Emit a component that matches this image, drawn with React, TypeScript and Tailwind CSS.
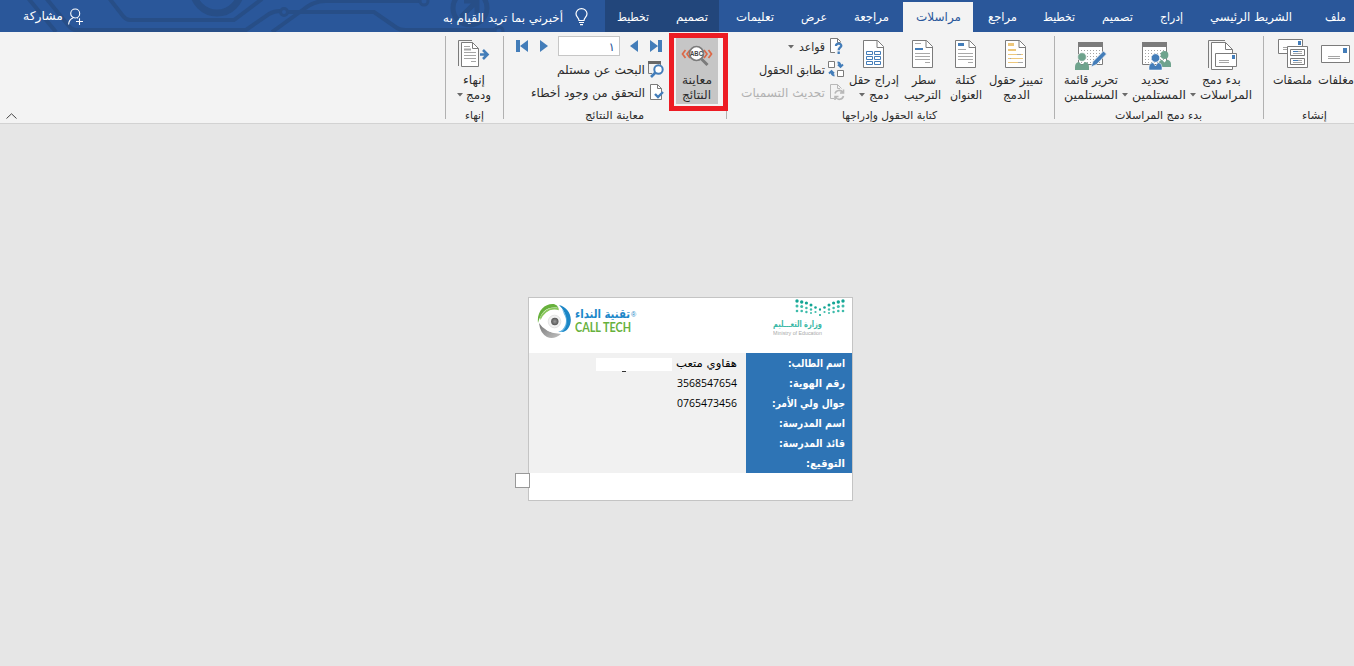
import { useLayoutEffect, useRef, useState, type ReactNode } from 'react';

/** Arabic label stretched or condensed to the width of its box. */
function Fit({ children, className = '', dir = 'rtl' }: { children: ReactNode; className?: string; dir?: 'rtl' | 'ltr' }) {
  const box = useRef<HTMLSpanElement>(null);
  const inner = useRef<HTMLSpanElement>(null);
  const [scale, setScale] = useState(1);
  useLayoutEffect(() => {
    if (box.current && inner.current && inner.current.offsetWidth) {
      setScale(box.current.clientWidth / inner.current.getBoundingClientRect().width);
    }
  }, []);
  return (
    <span ref={box} dir="ltr" className={`flex shrink-0 items-center whitespace-nowrap ${className.includes('h-[') ? '' : 'h-[15px] leading-[15px]'} ${className}`}>
      <span ref={inner} dir={dir} className="inline-block origin-left" style={{ transform: `scaleX(${scale})` }}>
        {children}
      </span>
    </span>
  );
}

function Caret({ className = '' }: { className?: string }) {
  return (
    <svg viewBox="0 0 6 4" className={`h-[4px] w-[6px] shrink-0 ${className}`}>
      <path d="M0 0H6L3 3.5Z" fill="#6a6a6a" />
    </svg>
  );
}

function Sep() {
  return <div className="mt-[4px] h-[83px] w-px shrink-0 bg-[#b1b1b1]" />;
}

function Group({ width, label, children }: { width: string; label: ReactNode; children: ReactNode }) {
  return (
    <section className={`flex h-[91px] shrink-0 flex-col ${width}`}>
      <div className="flex h-[76px] shrink-0">{children}</div>
      {label}
    </section>
  );
}

function Big({ className, icon, top, bottom }: { className: string; icon: ReactNode; top: ReactNode; bottom?: ReactNode }) {
  return (
    <div className={`flex shrink-0 flex-col pt-[5px] ${className}`}>
      <div className="flex h-[36px]">{icon}</div>
      <div className="flex h-[15px]">{top}</div>
      <div className="flex h-[15px] items-center">{bottom}</div>
    </div>
  );
}

const G = '#7b7b7b';
const B = '#437db9';

function Page({ children, className = '' }: { children?: ReactNode; className?: string }) {
  return (
    <svg viewBox="0 0 22 29" className={`mt-[3px] h-[29px] w-[22px] shrink-0 ${className}`}>
      <path d="M.5.5H14.5L20.5 6.5V27.5H.5Z" fill="#fff" stroke={G} />
      <path d="M14 .5V7.5H20.5" fill="none" stroke={G} />
      {children}
    </svg>
  );
}

function Circuit() {
  return (
    <svg viewBox="0 0 605 32" className="absolute left-0 top-0 h-[32px] w-[605px]" fill="none" stroke="#274e87" strokeWidth="4">
      <path d="M28 -2L56 32M46 -2L68 25Q72 30 76 30H246L269 14Q274 11 280 11M109 -2L123 16Q126 20 130 20H234L262 -1M272 32L304 9Q314 1 325 1H419M288 12H374L397 28Q400 30 405 30H494" />
      <circle cx="217" cy="-11" r="24" strokeWidth="7" />
      <circle cx="284" cy="12" r="3.5" strokeWidth="3" />
      <circle cx="424" cy="1" r="4" strokeWidth="3" />
      <circle cx="499" cy="31" r="4" strokeWidth="3" />
      <circle cx="470" cy="8" r="17" strokeWidth="5" />
      <path d="M461 17L476 2M464 1H477V14" strokeWidth="5" />
    </svg>
  );
}

function TabBar() {
  return (
    <header className="relative flex h-[32px] w-full bg-[#2a579a] text-[12px] text-white">
      <Circuit />
      <div className="relative flex w-[605px] shrink-0 items-start">
        <Fit className="ml-[23px] mt-[9px] w-[40px]">مشاركة</Fit>
        <svg viewBox="0 0 16 17" className="ml-[5px] mt-[8px] h-[17px] w-[16px]" fill="none" stroke="#fff" strokeWidth="1.1">
          <circle cx="7.2" cy="5.5" r="4.5" />
          <path d="M.6 16.5C.8 13 2.8 10.8 5.2 9.8M9 9.6L10 10.2M11.5 10.2V17M8 13.5H15" />
        </svg>
        <Fit className="ml-[359px] mt-[11px] w-[120px]">أخبرني بما تريد القيام به</Fit>
        <svg viewBox="0 0 13 18" className="ml-[12px] mt-[8px] h-[18px] w-[13px]" fill="none" stroke="#fff" strokeWidth="1.2">
          <path d="M4 12.5C4 9.5 1 9 1 5.8A5.3 5 0 0 1 12 5.8C12 9 9 9.5 9 12.5ZM4 14.5H9M5 16.6H8" />
        </svg>
      </div>
      <div className="flex h-[32px] w-[114px] shrink-0 bg-[#22467b] pt-[10px]">
        <Fit className="ml-[12px] w-[32px]">تخطيط</Fit>
        <Fit className="ml-[27px] w-[32px]">تصميم</Fit>
      </div>
      <div className="flex w-[184px] shrink-0 pt-[10px]">
        <Fit className="ml-[17px] w-[38px]">تعليمات</Fit>
        <Fit className="ml-[27px] w-[26px]">عرض</Fit>
        <Fit className="ml-[27px] w-[35px]">مراجعة</Fit>
      </div>
      <div className="mt-[2px] flex h-[30px] w-[70px] shrink-0 bg-[#f3f3f3] pt-[8px] text-[#2a579a]">
        <Fit className="ml-[13px] w-[45px]">مراسلات</Fit>
      </div>
      <div className="flex w-[381px] shrink-0 pt-[10px]">
        <Fit className="ml-[15px] w-[29px]">مراجع</Fit>
        <Fit className="ml-[26px] w-[32px]">تخطيط</Fit>
        <Fit className="ml-[27px] w-[31px]">تصميم</Fit>
        <Fit className="ml-[27px] w-[23px]">إدراج</Fit>
        <Fit className="ml-[27px] w-[82px]">الشريط الرئيسي</Fit>
        <Fit className="ml-[33px] w-[21px]">ملف</Fit>
      </div>
    </header>
  );
}

function FinishGroup() {
  return (
    <Group width="w-[57px]" label={<Fit className="ml-[19px] w-[19px] text-[11px]">إنهاء</Fit>}>
      <Big
        className="w-[57px]"
        icon={
          <svg viewBox="0 0 32 28" className="ml-[12px] mt-[3px] h-[28px] w-[32px]">
            <path d="M.5 26V.5H14" fill="none" stroke={G} />
            <path d="M3.5 2.5H14.5L20.5 8.5V26.5H3.5Z" fill="#fff" stroke={G} />
            <path d="M14.5 2.5V8.5H20.5" fill="none" stroke={G} />
            <path d="M6 6.5H12M6 12.5H18M6 15.5H18M6 18.5H18M13 21.5H18" stroke="#a5a5a5" />
            <path d="M6 9.5H13" stroke="#a5a5a5" strokeWidth="2" />
            <path d="M22 14.5H29M25 10L29.5 14.5L25 19" fill="none" stroke={B} strokeWidth="2.6" />
          </svg>
        }
        top={<Fit className="ml-[17px] w-[22px]">إنهاء</Fit>}
        bottom={<><Caret className="-mt-[2px] ml-[11px]" /><Fit className="ml-[3px] w-[25px]">ودمج</Fit></>}
      />
    </Group>
  );
}

function PreviewGroup() {
  return (
    <Group width="w-[222px]" label={<Fit className="ml-[81px] w-[59px] text-[11px]">معاينة النتائج</Fit>}>
      <div className="flex w-[165px] shrink-0 flex-col pt-[4px]">
        <div className="flex h-[20px] items-center">
          <svg viewBox="0 0 12 12" className="ml-[12px] h-[12px] w-[12px]" fill={B}><path d="M0 0H4V12H0ZM12 0V12L4 6Z" /></svg>
          <svg viewBox="0 0 8 12" className="ml-[12px] h-[12px] w-[8px]" fill={B}><path d="M0 0L8 6L0 12Z" /></svg>
          <div className="ml-[10px] flex h-[20px] w-[62px] items-center justify-end border border-[#c6c6c6] bg-white pr-[4px] pt-[2px] text-[12px] text-[#2a579a]">١</div>
          <svg viewBox="0 0 8 12" className="ml-[10px] h-[12px] w-[8px]" fill={B}><path d="M8 0L0 6L8 12Z" /></svg>
          <svg viewBox="0 0 12 12" className="ml-[12px] h-[12px] w-[12px]" fill={B}><path d="M8 0H12V12H8ZM0 0V12L8 6Z" /></svg>
        </div>
        <div className="mt-[5px] flex h-[17px]">
          <Fit className="ml-[53px] mt-[2px] w-[88px]">البحث عن مستلم</Fit>
          <svg viewBox="0 0 17 17" className="ml-[3px] h-[17px] w-[17px]">
            <path d="M.5 3V12.5H4M12.5 3V4" fill="none" stroke={G} />
            <path d="M0 0H13V3H0Z" fill="#686868" />
            <circle cx="10.5" cy="8.5" r="4.2" fill="#fff" stroke={B} strokeWidth="2" />
            <path d="M7.5 11.5L3 16" stroke={B} strokeWidth="2.6" />
          </svg>
        </div>
        <div className="mt-[6px] flex h-[17px]">
          <Fit className="ml-[27px] mt-[2px] w-[114px]">التحقق من وجود أخطاء</Fit>
          <svg viewBox="0 0 14 17" className="ml-[5px] h-[17px] w-[14px]">
            <path d="M.5.5H7.5L11.5 4.5V15.5H.5Z" fill="#fff" stroke={G} />
            <path d="M7.5.5V4.5H11.5" fill="none" stroke={G} />
            <path d="M5 10L8 13L13 8" fill="none" stroke={B} strokeWidth="2.4" />
          </svg>
        </div>
      </div>
      <div className="relative z-10 mt-px h-[78px] w-[59px] shrink-0 border-[5px] border-[#ed1c24] bg-[#f3f3f3]">
        <div className="ml-[2px] flex h-[66px] w-[42px] flex-col bg-[#c6c6c6] pt-[4px]">
          <svg viewBox="0 0 32 26" className="ml-[5px] h-[26px] w-[32px] shrink-0">
            <path d="M4.5 8L1.5 12L4.5 16M9 8L6 12L9 16M23 8L26 12L23 16M27.5 8L30.5 12L27.5 16" fill="none" stroke="#dc6847" strokeWidth="1.7" />
            <circle cx="15.5" cy="11.5" r="7" fill="#fff" stroke="#7b7b7b" strokeWidth="1.7" />
            <path d="M20.5 17L26.5 23" stroke="#7b7b7b" strokeWidth="3" />
            <text x="15.5" y="14" fontSize="6.5" fontWeight="bold" textAnchor="middle" textLength="13" lengthAdjust="spacingAndGlyphs" fill="#444" fontFamily="Liberation Sans, sans-serif">ABC</text>
          </svg>
          <Fit className="ml-[6px] mt-[5px] w-[30px]">معاينة</Fit>
          <Fit className="ml-[6px] w-[29px]">النتائج</Fit>
        </div>
      </div>
    </Group>
  );
}

function FieldsGroup() {
  return (
    <Group width="w-[327px]" label={<Fit className="ml-[115px] w-[95px] text-[11px]">كتابة الحقول وإدراجها</Fit>}>
      <div className="flex w-[119px] shrink-0 flex-col pt-[6px]">
        <div className="flex h-[17px]">
          <Caret className="ml-[61px] mt-[7px]" />
          <Fit className="ml-[5px] mt-[2px] w-[26px]">قواعد</Fit>
          <svg viewBox="0 0 14 17" className="ml-[5px] h-[17px] w-[14px]">
            <path d="M5 14.5H.5V.5H7.5L10.5 3.5V4" fill="#fff" stroke={G} />
            <path d="M7.5.5V4.5H10.5" fill="none" stroke={G} />
            <path d="M6 8C6 4.8 11.3 4.8 11.3 7.8C11.3 9.5 8.7 9.5 8.7 12.2M8.7 13.6V16" fill="none" stroke={B} strokeWidth="2.3" />
          </svg>
        </div>
        <div className="mt-[6px] flex h-[17px]">
          <Fit className="ml-[32px] mt-[2px] w-[66px]">تطابق الحقول</Fit>
          <svg viewBox="0 0 17 17" className="ml-[3px] h-[17px] w-[17px]">
            <path d="M.5.5H6.5V6.5H.5ZM9.5 9.5H15.5V15.5H9.5Z" fill="#fff" stroke={G} />
            <path d="M9.500 1.500Q12.500 1.500 12.500 5.500M10 3.500L12.500 6L15 3.500M6.500 14.500Q3.500 14.500 3.500 10.500M1 12.500L3.500 10L6 12.500" fill="none" stroke={B} strokeWidth="1.9" />
          </svg>
        </div>
        <div className="mt-[6px] flex h-[17px] text-[#b1b1b1]">
          <Fit className="ml-[14px] mt-[2px] w-[84px]">تحديث التسميات</Fit>
          <svg viewBox="0 0 15 17" className="ml-[5px] h-[17px] w-[15px]" fill="none" stroke="#b8b8b8">
            <path d="M4 14.500H.5V.5H7.500L11.500 4.500M7.500 .5V4.500H10" />
            <path d="M5 9.500A4.300 4.300 0 0 1 12.800 8.500M13.500 5.500V9H10M13.500 12A4.300 4.300 0 0 1 5.500 13M5 16V12.500H8.500" strokeWidth="1.6" />
          </svg>
        </div>
      </div>
      <Big
        className="ml-[3px] w-[50px]"
        icon={
          <Page className="ml-[14px]">
            <path d="M3.500 11.500H9.500V14.500H3.500ZM11.500 11.500H17.500V14.500H11.500ZM3.500 16.500H9.500V19.500H3.500ZM11.500 16.500H17.500V19.500H11.500ZM3.500 21.500H9.500V24.500H3.500ZM11.500 21.500H17.500V24.500H11.500Z" fill="none" stroke={B} />
          </Page>
        }
        top={<Fit className="w-[50px]">إدراج حقل</Fit>}
        bottom={<><Caret className="-mt-[2px] ml-[10px]" /><Fit className="ml-[4px] w-[20px]">دمج</Fit></>}
      />
      <Big
        className="ml-[5px] w-[38px]"
        icon={
          <Page className="ml-[8px]">
            <path d="M3 3.500H9M3 13.500H18M3 16.500H18M3 19.500H18M13 22.500H18" stroke="#a9a9a9" />
            <path d="M3 9H11" stroke={B} strokeWidth="2" />
          </Page>
        }
        top={<Fit className="ml-[8px] w-[24px]">سطر</Fit>}
        bottom={<Fit className="w-[37px]">الترحيب</Fit>}
      />
      <Big
        className="ml-[8px] w-[32px]"
        icon={
          <Page className="ml-[5px]">
            <path d="M3 9.500H11M3 13.500H18M3 16.500H18M3 19.500H18M13 22.500H18" stroke="#a9a9a9" />
            <path d="M3 4.500H9" stroke={B} strokeWidth="3" />
          </Page>
        }
        top={<Fit className="ml-[5px] w-[21px]">كتلة</Fit>}
        bottom={<Fit className="w-[32px]">العنوان</Fit>}
      />
      <Big
        className="ml-[7px] w-[54px]"
        icon={
          <Page className="ml-[16px]">
            <path d="M3 14.500H18M3 18.500H18M3 22.500H18" stroke="#edc77c" strokeWidth="1.2" />
            <path d="M12 14.500H16M5 18.500H6M13 22.500H18" stroke="#a9a9a9" />
            <path d="M3 4.500H9" stroke="#edc77c" strokeWidth="3" />
            <path d="M3 10H11" stroke="#edc77c" strokeWidth="2" />
          </Page>
        }
        top={<Fit className="w-[54px]">تمييز حقول</Fit>}
        bottom={<Fit className="ml-[14px] w-[27px]">الدمج</Fit>}
      />
    </Group>
  );
}

function Calendar() {
  return (
    <>
      <path d="M.5 4V22.500H24.500V4" fill="#fff" stroke={G} />
      <path d="M0 0H25V5H0Z" fill="#7b7b7b" />
      <path d="M3 8.500H23M3 11.500H23M3 14.500H23M3 17.500H23M3 20.500H23" stroke="#a5a5a5" strokeDasharray="1 2" />
    </>
  );
}

function StartGroup() {
  return (
    <Group width="w-[208px]" label={<Fit className="ml-[60px] w-[87px] text-[11px]">بدء دمج المراسلات</Fit>}>
      <Big
        className="ml-[9px] w-[54px]"
        icon={
          <svg viewBox="-3 0 33 29" className="ml-[11px] mt-[5px] h-[29px] w-[33px]">
            <Calendar />
            <circle cx="4" cy="15" r="4.300" fill="#6fa38d" stroke="#f3f3f3" strokeWidth=".7" />
            <path d="M-3 28V25Q-3 20.500 1 20L4 23L7 20Q11 20.500 11 25V28Z" fill="#6fa38d" />
            <path d="M13 25L15 19.500L25.500 9L28.500 12L18.500 22.500Z" fill={B} stroke="#f3f3f3" strokeWidth=".8" />
          </svg>
        }
        top={<Fit className="w-[54px]">تحرير قائمة</Fit>}
        bottom={<Fit className="w-[54px]">المستلمين</Fit>}
      />
      <Big
        className="ml-[4px] w-[64px]"
        icon={
          <svg viewBox="0 0 30 29" className="ml-[20px] mt-[5px] h-[29px] w-[30px]">
            <Calendar />
            <circle cx="22.500" cy="13" r="3.900" fill="#6fa38d" />
            <path d="M17 25V21Q17 18.500 20 17.800L22.500 20.500L25 17.800Q29 18.500 29 22V25Z" fill="#6fa38d" />
            <circle cx="13.500" cy="16" r="4.300" fill={B} stroke="#fff" strokeWidth=".7" />
            <path d="M7 28V25Q7 21 11 20.500L13.500 24L16 20.500Q20 21 20 25V28Z" fill={B} stroke="#fff" strokeWidth=".5" />
          </svg>
        }
        top={<Fit className="ml-[19px] w-[28px]">تحديد</Fit>}
        bottom={<><Caret className="-mt-[2px]" /><Fit className="ml-[4px] w-[54px]">المستلمين</Fit></>}
      />
      <Big
        className="ml-[4px] w-[62px]"
        icon={
          <svg viewBox="0 0 30 31" className="ml-[18px] mt-[3px] h-[31px] w-[30px]">
            <path d="M.5 28V.5H17" fill="none" stroke={G} />
            <path d="M3.500 2.500H17.500L24.500 9.500V29.500H3.500Z" fill="#fff" stroke={G} />
            <path d="M17.500 2.500V9.500H24.500" fill="none" stroke={G} />
            <path d="M7.500 13.500H28.500V26.500H7.500Z" fill="#fff" stroke={G} />
            <path d="M24 15H27V19H24Z" fill={B} />
            <path d="M11 20.500H21M11 22.500H21" stroke="#a5a5a5" />
          </svg>
        }
        top={<Fit className="ml-[12px] w-[39px]">بدء دمج</Fit>}
        bottom={<><Caret className="-mt-[2px]" /><Fit className="ml-[4px] w-[52px]">المراسلات</Fit></>}
      />
    </Group>
  );
}

function CreateGroup() {
  return (
    <Group width="w-[90px]" label={<Fit className="ml-[38px] w-[25px] text-[11px]">إنشاء</Fit>}>
      <Big
        className="ml-[9px] w-[39px]"
        icon={
          <svg viewBox="0 0 30 29" className="ml-[5px] mt-[2px] h-[29px] w-[30px]">
            <path d="M.5.5H24.500V14.500H.5Z" fill="#fff" stroke={G} />
            <path d="M20 2H23V6H20Z" fill={B} />
            <path d="M5 8.500H10M5 10.500H10" stroke="#a5a5a5" />
            <path d="M9.500 7.500H29.500V28.500H9.500Z" fill="#fff" stroke={G} />
            <path d="M12.500 10.500H26.500V16.500H12.500ZM12.500 19.500H26.500V25.500H12.500Z" fill="#fff" stroke={G} />
            <path d="M15 12.500H20M15 21.500H20" stroke={B} />
            <path d="M20 12.500H24M15 14.500H24M20 21.500H24M15 23.500H24" stroke="#a5a5a5" />
          </svg>
        }
        top={<Fit className="w-[39px]">ملصقات</Fit>}
      />
      <Big
        className="ml-[6px] w-[36px]"
        icon={
          <svg viewBox="0 0 29 18" className="ml-[3px] mt-[8px] h-[18px] w-[29px]">
            <path d="M.5.5H28.500V17.500H.5Z" fill="#fff" stroke={G} />
            <path d="M22 3H26V8H22Z" fill={B} />
            <path d="M7 11.500H19M7 13.500H19" stroke="#a5a5a5" />
          </svg>
        }
        top={<Fit className="w-[36px]">مغلفات</Fit>}
      />
    </Group>
  );
}

function Ribbon() {
  return (
    <div className="flex h-[92px] w-full border-b border-[#d2d2d2] bg-[#f3f3f3] text-[12px] text-[#2b2b2b]">
      <div className="flex w-[445px] shrink-0 items-end pb-[4px] pl-[6px]">
        <svg viewBox="0 0 11 6" className="h-[6px] w-[11px]" fill="none" stroke="#444"><path d="M.5 5.500L5.500 .8L10.500 5.500" /></svg>
      </div>
      <Sep />
      <FinishGroup />
      <Sep />
      <PreviewGroup />
      <Sep />
      <FieldsGroup />
      <Sep />
      <StartGroup />
      <Sep />
      <CreateGroup />
    </div>
  );
}

const dots = [
  [0, 0, 1.7], [4.7, 1, 1.7], [9.4, 2, 1.6], [14, 4, 1.5], [18.5, 6.5, 1.3], [23, 8.5, 1.1],
  [0, 5, 1.5], [4.7, 5.5, 1.5], [9.4, 7, 1.3], [14, 8.5, 1.2], [18.5, 11, 1.1],
  [0, 10, 1.3], [4.7, 10, 1.3], [9.4, 11, 1.2], [14, 12, 1], [23, 14, 1],
];

function MinistryLogo() {
  return (
    <div className="flex w-[76px] flex-col pt-px">
      <svg viewBox="-2 -2 50 20" className="ml-[22px] h-[20px] w-[50px]">
        {dots.map(([x, y, r], i) => (
          <g key={i} fill={i < 6 ? '#12a594' : '#3dbbaa'}>
            <circle cx={x} cy={y} r={r} />
            <circle cx={46 - x} cy={y} r={r} />
          </g>
        ))}
      </svg>
      <Fit className="-mt-[2px] w-[49px] text-[9px] font-bold text-[#39b8a6]">وزارة التعـــليم</Fit>
      <Fit dir="ltr" className="-mt-[6px] w-[49px] font-['Liberation_Sans',sans-serif] text-[6px] text-[#aaa]">Ministry of Education</Fit>
    </div>
  );
}

function CallTechLogo() {
  return (
    <div className="flex">
      <svg viewBox="0 0 36 36" className="h-[36px] w-[36px]">
        <defs>
          <linearGradient id="ring" x1="0" y1="0" x2="1" y2="1">
            <stop offset="0" stopColor="#777" />
            <stop offset="1" stopColor="#c2c2c2" />
          </linearGradient>
          <radialGradient id="eye">
            <stop offset="0" stopColor="#999" />
            <stop offset="1" stopColor="#555" />
          </radialGradient>
        </defs>
        <path d="M22 2C31 4 37 14 32 24Q30 28 26 29H20C30 23 32 11 22 2Z" fill="#1b86c6" />
        <path d="M25 6C32 14 31 24 25 29L22 29C29 22 29 15 25 6Z" fill="#63b4e2" />
        <path d="M2 20Q8 30 24 31Q17 37 10 34Q3 30 2 20Z" fill="url(#ring)" />
        <path d="M1 20C-.5 8 8 0 17 1Q20.500 2 21.500 5C10 3 4 9 1 20Z" fill="#67b13c" />
        <path d="M3 14Q9 3 21.500 5L22 8Q10 4 3.500 17Z" fill="#8bc75f" />
        <circle cx="17.500" cy="18" r="11.500" fill="#fff" />
        <circle cx="17.500" cy="18.500" r="6.300" fill="#f1f1f1" stroke="#ddd" strokeWidth=".8" />
        <circle cx="17.800" cy="18.500" r="3.700" fill="url(#eye)" />
      </svg>
      <div className="ml-[2px] flex flex-col pt-[5px]">
        <div className="flex h-[13px]">
          <Fit className="h-[13px] w-[55px] text-[12px] font-bold leading-[13px] text-[#1c87c9]">تقنية النداء</Fit>
          <span className="ml-px pt-[2px] font-['Liberation_Sans',sans-serif] text-[7px] leading-[9px] text-[#1c87c9]">®</span>
        </div>
        <Fit dir="ltr" className="h-[13px] w-[56px] font-[Lato,sans-serif] text-[13px] font-bold leading-[13px] text-[#67b13c]">CALL TECH</Fit>
      </div>
    </div>
  );
}

function Card() {
  return (
    <div className="relative h-[204px] w-[325px] border border-[#c4c4c4] bg-white text-[11px]">
      <div className="flex h-[55px] justify-between pl-[8px] pr-[3px]">
        <div className="pt-[5px]"><CallTechLogo /></div>
        <div><MinistryLogo /></div>
      </div>
      <div className="flex h-[120px]">
        <div className="flex w-[217px] flex-col items-end bg-[#f1f1f1] pr-[9px] text-black">
          <div className="flex h-[20px] items-start">
            <div className="mr-[4px] mt-[5px] flex w-[76px] flex-col">
              <div className="h-[13px] bg-white" />
              <div className="ml-[26px] h-px w-[4px] bg-[#333]" />
            </div>
            <Fit className="mt-[3px] w-[61px]">هقاوي متعب</Fit>
          </div>
          <div className="flex h-[20px] items-start pt-[2px]"><Fit dir="ltr" className="w-[60px] font-['Open_Sans',sans-serif] text-[11px]">3568547654</Fit></div>
          <div className="flex h-[20px] items-start pt-[2px]"><Fit dir="ltr" className="w-[60px] font-['Open_Sans',sans-serif] text-[11px]">0765473456</Fit></div>
        </div>
        <div className="flex w-[106px] flex-col items-end bg-[#2e74b5] pr-[7px] pt-[3px] font-bold text-white">
          <Fit className="mb-[5px] w-[57px]">اسم الطالب:</Fit>
          <Fit className="mb-[5px] w-[56px]">رقم الهوية:</Fit>
          <Fit className="mb-[5px] w-[73px]">جوال ولي الأمر:</Fit>
          <Fit className="mb-[5px] w-[66px]">اسم المدرسة:</Fit>
          <Fit className="mb-[5px] w-[66px]">قائد المدرسة:</Fit>
          <Fit className="w-[39px]">التوقيع:</Fit>
        </div>
      </div>
      <div className="absolute -left-[14px] top-[175px] h-[15px] w-[15px] border border-[#999] bg-white" />
    </div>
  );
}

export default function App() {
  return (
    <div dir="ltr" className="flex h-[666px] w-[1354px] flex-col overflow-hidden bg-[#e6e6e6] font-['DejaVu_Sans',sans-serif]">
      <TabBar />
      <Ribbon />
      <main className="flex flex-1 pl-[528px] pt-[173px]">
        <Card />
      </main>
    </div>
  );
}
